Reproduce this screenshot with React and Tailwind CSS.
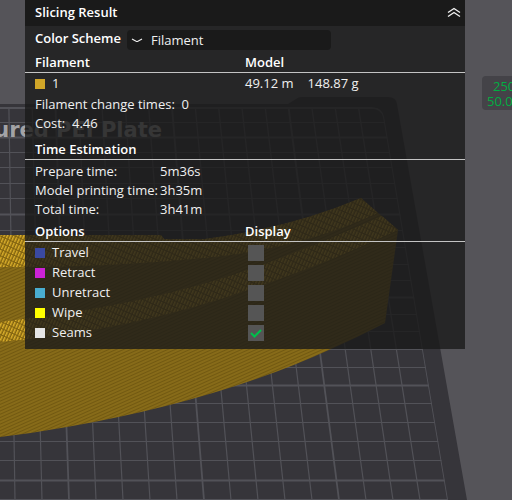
import React, { useState } from "react";

// Lines of the build plate grid, every fifth one is drawn stronger
const rows = [108, 122, 137, 152, 167, 183, 198, 214, 230, 247, 264, 280, 297, 314, 331, 349, 367, 385, 403, 422, 441, 460, 480, 499];
const boldRows = [137, 214, 297, 385, 480];
const columns = Array.from({ length: 17 }, (_, i) => i - 13);

const times = [
  { label: "Prepare time:", value: "5m36s" },
  { label: "Model printing time:", value: "3h35m" },
  { label: "Total time:", value: "3h41m" },
];

const initialOptions = [
  { id: "travel", label: "Travel", color: "bg-[#3a49a0]", shown: false },
  { id: "retract", label: "Retract", color: "bg-[#cc22d6]", shown: false },
  { id: "unretract", label: "Unretract", color: "bg-[#49add0]", shown: false },
  { id: "wipe", label: "Wipe", color: "bg-[#ffff00]", shown: false },
  { id: "seams", label: "Seams", color: "bg-[#e6e6e6]", shown: true },
];

const PlateScene = () => (
  <svg
    className="absolute inset-0 h-full w-full"
    viewBox="0 0 512 500"
    preserveAspectRatio="xMinYMin slice"
    aria-hidden="true"
  >
    <defs>
      <pattern id="infill" width="3" height="3" patternUnits="userSpaceOnUse" patternTransform="rotate(-24)">
        <rect width="3" height="3" fill="#876b19" />
        <rect width="3" height="1" fill="#725911" />
      </pattern>
      <pattern id="wall" width="3" height="6" patternUnits="userSpaceOnUse" patternTransform="rotate(24)">
        <rect width="3" height="6" fill="#80620f" />
        <rect width="1.5" height="5" fill="#dcb02c" />
      </pattern>
      <clipPath id="grid">
        <path d="M-5 107H371Q382 107 384 117L448 500H-5Z" />
      </clipPath>
    </defs>

    {/* Build plate */}
    <path d="M-5 104H288L296 99Q298 97 302 97H388Q396 97 397 104L467 500H-5Z" fill="#36353a" />
    <g clipPath="url(#grid)" stroke="#525258" fill="none">
      {rows.map((y) => (
        <path key={y} d={`M0 ${y}.5H450`} strokeWidth={boldRows.includes(y) ? 1.8 : 1} />
      ))}
      {columns.map((i) => (
        <path
          key={i}
          d={`M${288.5 + i * 23.3} 107L${339 + i * 27} 500`}
          strokeWidth={i % 5 === 0 ? 1.8 : 1.2}
        />
      ))}
      <path d="M0 107.5H371Q382 108 384 117L448 500" strokeWidth="1.8" />
    </g>
    <text x="162" y="137" textAnchor="end" fontSize="21" fontWeight="700" fontFamily="DejaVu Sans, sans-serif" fill="#a3a3a6">
      Textured PEI Plate
    </text>

    {/* Sliced model */}
    <path
      d="M0 235H161L164 239H205Q290 228 361 198L378 213L382 216L398 230L385 323Q358 337 331 349Q294 366 256 379Q170 409 67 427Q34 433 0 437Z"
      fill="url(#infill)"
    />
    <path d="M0 235H161L164 239H205Q290 228 361 198L378 213Q300 249 205 258Q100 268 0 267Z" fill="url(#wall)" />
    <path d="M0 322Q150 305 256 267Q322 243 382 216L398 230Q330 262 265 284Q140 330 0 342Z" fill="url(#wall)" />
  </svg>
);

const SectionTitle = ({ left, right }) => (
  <div className="grid grid-cols-[210px_1fr] border-b border-[#c4c4c4] px-[10px] font-semibold leading-5 text-white">
    <h2>{left}</h2>
    {right && <h2>{right}</h2>}
  </div>
);

const App = () => {
  const [options, setOptions] = useState(initialOptions);
  const [collapsed, setCollapsed] = useState(false);

  const toggleOption = (id) => {
    setOptions(options.map((o) => (o.id === id ? { ...o, shown: !o.shown } : o)));
  };

  return (
    <main className="relative flex min-h-screen items-start overflow-hidden bg-[#555459] pl-[25px] font-['Open_Sans',sans-serif] text-[13px] text-[#f0f0f0]">
      <PlateScene />

      {/* Result panel */}
      <section className="relative mr-[17px] min-w-0 flex-1 bg-[#1a1a1a]/80">
        <header className="flex h-[26px] items-center justify-between bg-[#1a1a1a] pl-[10px] pr-1">
          <h1 className="font-semibold text-white">Slicing Result</h1>
          <button type="button" aria-label="Collapse panel" onClick={() => setCollapsed(!collapsed)}>
            <svg className="h-4 w-4" viewBox="0 0 16 16" fill="none" stroke="#f0f0f0" strokeWidth="1.4">
              <path d="M3 7.5L9 3.5L15 7.5M3 11.5L9 7.5L15 11.5" />
            </svg>
          </button>
        </header>

        {!collapsed && (
          <div className="pb-[6px]">
            <div className="flex h-[26px] px-[10px]">
              <label htmlFor="scheme" className="w-[92px] font-semibold leading-6 text-white">Color Scheme</label>
              <div className="relative pt-1">
                <select
                  id="scheme"
                  className="block h-5 w-[204px] appearance-none rounded-sm bg-[#1a1a1a] pl-6 leading-5"
                >
                  <option>Filament</option>
                </select>
                <svg className="pointer-events-none absolute left-1 top-2 h-3 w-3" viewBox="0 0 12 12" fill="none" stroke="#f0f0f0" strokeWidth="1.2">
                  <path d="M1 5L5.5 7.5H6.5L11 5" />
                </svg>
              </div>
            </div>

            <SectionTitle left="Filament" right="Model" />
            <div className="grid h-[22px] grid-cols-[210px_1fr] items-center px-[10px]">
              <div className="flex items-center gap-[7px]">
                <span className="h-[10px] w-[10px] bg-[#d0a528]" />
                <span>1</span>
              </div>
              <div className="flex gap-[14px]">
                <span>49.12 m</span>
                <span>148.87 g</span>
              </div>
            </div>
            <p className="px-[10px] leading-[19px]">Filament change times:&nbsp; 0</p>
            <p className="mb-[6px] px-[10px] leading-[19px]">Cost:&nbsp; 4.46</p>

            <SectionTitle left="Time Estimation" />
            <dl className="my-[2px] px-[10px] leading-[19px]">
              {times.map((t) => (
                <div key={t.label} className="flex">
                  <dt className="w-[125px] whitespace-nowrap">{t.label}</dt>
                  <dd>{t.value}</dd>
                </div>
              ))}
            </dl>

            <SectionTitle left="Options" right="Display" />
            <ul className="pt-px">
              {options.map((o) => (
                <li key={o.id} className="grid h-5 grid-cols-[213px_1fr] items-center px-[10px]">
                  <label htmlFor={o.id} className="flex items-center gap-[7px]">
                    <span className={`h-[10px] w-[10px] ${o.color}`} />
                    {o.label}
                  </label>
                  <span className="relative h-4 w-4">
                    <input
                      id={o.id}
                      type="checkbox"
                      checked={o.shown}
                      onChange={() => toggleOption(o.id)}
                      className="block h-4 w-4 appearance-none bg-[#555555]"
                    />
                    {o.shown && (
                      <svg className="pointer-events-none absolute inset-0 h-4 w-4" viewBox="0 0 16 16" fill="none" stroke="#00c04b" strokeWidth="2">
                        <path d="M3 8L6.5 11.5L13 5" />
                      </svg>
                    )}
                  </span>
                </li>
              ))}
            </ul>
          </div>
        )}
      </section>

      {/* Ruler label, runs past the edge of the view */}
      <aside className="relative -mr-2 mt-[76px] w-[38px] shrink-0 whitespace-nowrap rounded-sm bg-[#444348] pb-px pl-[5px] pt-[3px] leading-[15px] text-[#00ae42]">
        <p className="pl-[6px]">250</p>
        <p>50.00</p>
      </aside>
    </main>
  );
};

export default App;
